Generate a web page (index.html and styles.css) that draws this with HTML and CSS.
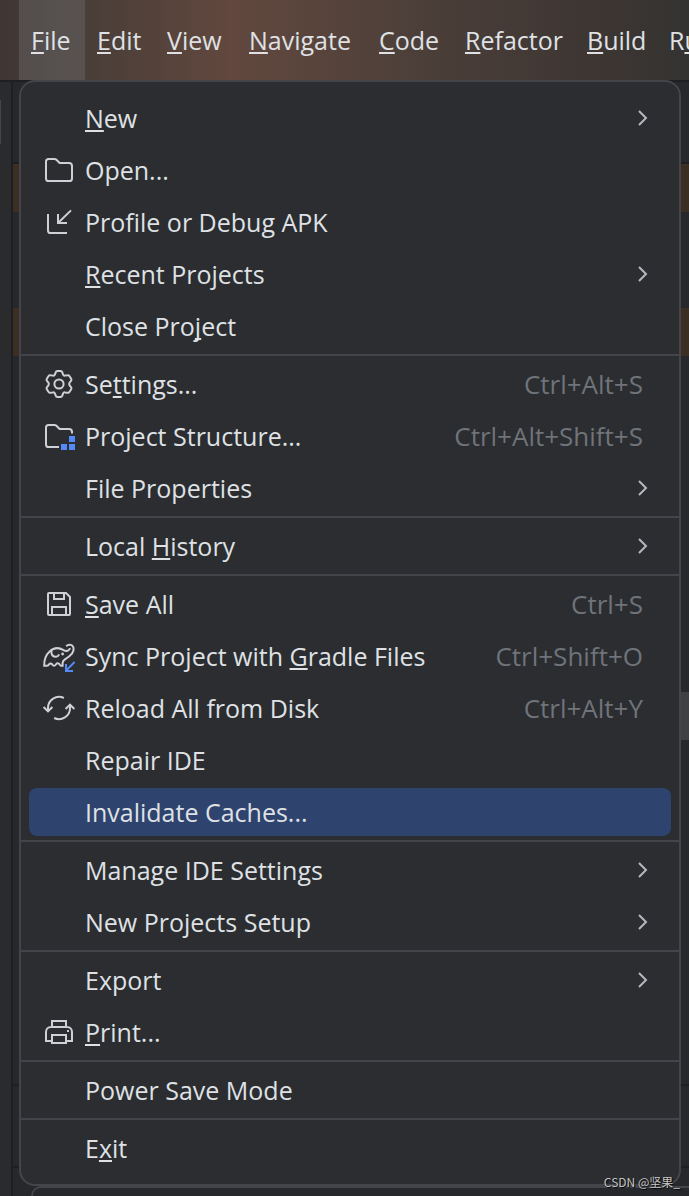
FILE: index.html
```html
<!DOCTYPE html>
<html lang="en">
<head>
    <meta charset="UTF-8">
    <meta name="viewport" content="width=device-width, initial-scale=1.0">
    <title>File Menu</title>
    <link rel="stylesheet" href="styles.css">
</head>
<body>
    <nav class="menubar">
        <button type="button" class="active"><u>F</u>ile</button>
        <button type="button"><u>E</u>dit</button>
        <button type="button"><u>V</u>iew</button>
        <button type="button"><u>N</u>avigate</button>
        <button type="button"><u>C</u>ode</button>
        <button type="button"><u>R</u>efactor</button>
        <button type="button"><u>B</u>uild</button>
        <button type="button">R<u>u</u>n</button>
    </nav>

    <!-- editor window behind the menu -->
    <main class="workspace">
        <div class="rail"><div class="tool"></div></div>
        <div class="editor">
            <div class="tabs"></div>
            <div class="band"></div>
            <div class="gap"></div>
            <div class="band"></div>
            <div class="code"><div class="thumb"></div></div>
            <div class="panel"></div>
            <div class="status"></div>
            <div class="popup"></div>
        </div>
    </main>

    <div class="menu">
        <button type="button">
            <span class="icon"></span>
            <span class="label"><u>N</u>ew</span>
            <svg class="arrow" viewBox="0 0 10 16"><path d="M1 1l7 7-7 7"/></svg>
        </button>
        <button type="button">
            <svg class="icon" viewBox="0 0 16 16"><path d="M1.5 3.8c0-.8.5-1.3 1.3-1.3h2.9c.4 0 .7.1 1 .4L8.3 4.5H13c.9 0 1.5.6 1.5 1.5v6.2c0 .8-.5 1.3-1.3 1.3H2.8c-.8 0-1.3-.5-1.3-1.3z"/></svg>
            <span class="label">Open...</span>
        </button>
        <button type="button">
            <svg class="icon" viewBox="0 0 16 16"><path d="M2.5 4v8.2c0 .8.5 1.3 1.3 1.3H12M14 2.200L7.5 8.5M7.5 4v4.5H12"/></svg>
            <span class="label">Profile or Debug APK</span>
        </button>
        <button type="button">
            <span class="icon"></span>
            <span class="label"><u>R</u>ecent Projects</span>
            <svg class="arrow" viewBox="0 0 10 16"><path d="M1 1l7 7-7 7"/></svg>
        </button>
        <button type="button">
            <span class="icon"></span>
            <span class="label">Close Pro<u>j</u>ect</span>
        </button>
        <hr>
        <button type="button">
            <svg class="icon" viewBox="0 0 16 16"><path d="M7.2 1.5h1.600c.4 0 .7.2.8.6l.4 1.100c.2.5.6.7 1.100.6l1.200-.2c.4-.1.7.1.9.4l.9 1.400c.2.3.2.7-.1 1l-.7.9c-.3.4-.3.9 0 1.400l.7.9c.3.3.3.7.1 1l-.9 1.400c-.2.3-.5.5-.9.4l-1.200-.2c-.5-.1-.9.1-1.100.6l-.4 1.100c-.1.4-.4.6-.8.6H7.2c-.4 0-.7-.2-.8-.6L6 12.800c-.2-.5-.6-.7-1.100-.6l-1.200.2c-.4.1-.7-.1-.9-.4l-.9-1.400c-.2-.3-.2-.7.1-1l.7-.9c.3-.5.3-1 0-1.400L2 6.400c-.3-.3-.3-.7-.1-1L2.800 4c.2-.3.5-.5.9-.4l1.200.2c.5.1.9-.1 1.100-.6l.4-1.100c.1-.4.4-.6.8-.6z"/><circle cx="8" cy="8" r="2.3"/></svg>
            <span class="label">Se<u>t</u>tings...</span>
            <span class="keys">Ctrl+Alt+S</span>
        </button>
        <button type="button">
            <svg class="icon" viewBox="0 0 16 16"><path d="M8 13.5H2.8c-.8 0-1.3-.5-1.3-1.3V3.8c0-.8.5-1.3 1.3-1.3h2.900c.4 0 .7.1 1 .4L8.3 4.5H13c.9 0 1.5.6 1.5 1.5v.8"/><path class="blue-fill" d="M13 8h3v3h-3zM9 12h3v3H9zM13 12h3v3h-3z"/></svg>
            <span class="label">Project Structure...</span>
            <span class="keys">Ctrl+Alt+Shift+S</span>
        </button>
        <button type="button">
            <span class="icon"></span>
            <span class="label">File Properties</span>
            <svg class="arrow" viewBox="0 0 10 16"><path d="M1 1l7 7-7 7"/></svg>
        </button>
        <hr>
        <button type="button">
            <span class="icon"></span>
            <span class="label">Local <u>H</u>istory</span>
            <svg class="arrow" viewBox="0 0 10 16"><path d="M1 1l7 7-7 7"/></svg>
        </button>
        <hr>
        <button type="button">
            <svg class="icon" viewBox="0 0 16 16"><path d="M3 2.5h8.500l2 2V13c0 .3-.2.5-.5.5H3c-.3 0-.5-.2-.5-.5V3c0-.3.2-.5.5-.5zM5.5 2.5v3h5v-3M4.5 13.500v-4h7v4"/></svg>
            <span class="label"><u>S</u>ave All</span>
            <span class="keys">Ctrl+S</span>
        </button>
        <button type="button">
            <svg class="icon" viewBox="0 0 16 16"><path d="M11.6 3.1C12.7 2 14.6 2.200 15.200 3.700c.8 2.200-1.300 4.200-4.400 6.100-.7.5-1 1-1 1.700v1.400H9c-.4 0-.6-.6-1-1-.5-.4-1-.4-1.400.1-.3.4-.5.900-1.100.9s-.7-.5-1.100-.9-.9-.4-1.300.1c-.3.5-.6.8-1.200.8H.600C.500 9.700 1.300 7.500 3.300 5.700c2.200-2 4.900-1.900 7-.6 1.300.7 3 .4 3.200-1"/><path d="M4.300 5.200c-.4 1.800.4 3.100 1.900 3.200 1 .1 1.500-.4 1.900-1.200"/><circle class="dot" cx="9.800" cy="7" r=".7"/><path class="blue" d="M15.800 11l-4.300 4.300M11.500 12v3.500H15"/></svg>
            <span class="label">Sync Project with <u>G</u>radle Files</span>
            <span class="keys">Ctrl+Shift+O</span>
        </button>
        <button type="button">
            <svg class="icon" viewBox="0 0 16 16"><path d="M2.5 9.500V8A5.500 5.500 0 0 1 10.400 3M.3 7.500l2.200 2.200 2.200-2.200M13.500 6.500V8a5.500 5.500 0 0 1-7.900 5M11.300 8.500l2.200-2.200 2.200 2.200"/></svg>
            <span class="label">Reload All from Disk</span>
            <span class="keys">Ctrl+Alt+Y</span>
        </button>
        <button type="button">
            <span class="icon"></span>
            <span class="label">Repair IDE</span>
        </button>
        <button type="button" class="selected">
            <span class="icon"></span>
            <span class="label">Invalidate Caches...</span>
        </button>
        <hr>
        <button type="button">
            <span class="icon"></span>
            <span class="label">Manage IDE Settings</span>
            <svg class="arrow" viewBox="0 0 10 16"><path d="M1 1l7 7-7 7"/></svg>
        </button>
        <button type="button">
            <span class="icon"></span>
            <span class="label">New Projects Setup</span>
            <svg class="arrow" viewBox="0 0 10 16"><path d="M1 1l7 7-7 7"/></svg>
        </button>
        <hr>
        <button type="button">
            <span class="icon"></span>
            <span class="label">Export</span>
            <svg class="arrow" viewBox="0 0 10 16"><path d="M1 1l7 7-7 7"/></svg>
        </button>
        <button type="button">
            <svg class="icon" viewBox="0 0 16 16"><path d="M4.5 5.5v-3h7v3M4.5 12.5h-3V8c0-1.400 1-2.500 2.500-2.500h8c1.500 0 2.500 1.100 2.500 2.500v4.500h-3M4.5 9.500h7v4h-7z"/><path class="dot" d="M12 7h1v1h-1z"/></svg>
            <span class="label"><u>P</u>rint...</span>
        </button>
        <hr>
        <button type="button">
            <span class="icon"></span>
            <span class="label">Power Save Mode</span>
        </button>
        <hr>
        <button type="button">
            <span class="icon"></span>
            <span class="label">E<u>x</u>it</span>
        </button>
    </div>

    <div class="watermark">CSDN @坚果_</div>
</body>
</html>
```
FILE: styles.css
```css
* {
    box-sizing: border-box;
}

body {
    margin: 0;
    height: 100vh;
    display: flex;
    flex-direction: column;
    position: relative;
    overflow: hidden;
    background-color: #26282b;
    color: #dfe1e5;
    font-family: "Open Sans", "Noto Sans", sans-serif;
    font-size: 25px;
}

button {
    border: none;
    background: none;
    color: inherit;
    font: inherit;
    text-align: left;
    white-space: nowrap;
}

u {
    text-decoration: underline 2px;
    text-underline-offset: 2px;
    text-decoration-skip-ink: none;
}

/* top bar */
.menubar {
    display: grid;
    grid-template-columns: 66px 70px 82px 130px 86px 122px 82px minmax(0, 1fr);
    flex: none;
    height: 80px;
    padding-left: 19px;
    background: linear-gradient(90deg, #403735 0, #4e4039 120px, #62483e 232px, #4c3f39 415px, #3e3633 590px, #343331 100%);
}

.menubar button {
    padding: 0 0 0 12px;
    overflow: hidden;
}

.menubar .active {
    background-color: rgba(110, 112, 115, 0.4);
}

/* background window */
.workspace {
    display: flex;
    flex: 1;
    min-height: 0;
    border-top: 2px solid #1e1f22;
}

.rail {
    width: 13px;
    padding-top: 18px;
    border-right: 2px solid #1e1f22;
    background-color: #292b2d;
}

.tool {
    width: 1px;
    height: 44px;
    background-color: #43454a;
}

.editor {
    display: flex;
    flex-direction: column;
    flex: 1;
}

.tabs {
    height: 82px;
    border-bottom: 2px solid #1e1f22;
}

.band {
    height: 48px;
    background-color: #3a2f22;
}

.gap {
    height: 96px;
}

.code {
    flex: 1;
    padding-top: 336px;
}

.thumb {
    width: 20px;
    height: 48px;
    margin-left: auto;
    background-color: #3e4044;
}

.panel,
.status {
    height: 82px;
    border-top: 2px solid #1e1f22;
}

.status {
    height: 20px;
}

.popup {
    height: 10px;
    margin-left: 18px;
    border: 2px solid #43454a;
    border-width: 2px 0 0 2px;
    border-radius: 10px 0 0 0;
}

/* file menu */
.menu {
    position: absolute;
    top: 80px;
    left: 19px;
    right: 8px;
    padding: 10px 0 8px 0;
    border: 2px solid #43454a;
    border-radius: 16px;
    background-color: #2b2d30;
}

.menu button {
    display: flex;
    align-items: center;
    gap: 10px;
    width: calc(100% - 16px);
    height: 48px;
    margin: 2px 8px 4px 8px;
    padding: 0 28px 0 14px;
    border-radius: 8px;
}

.menu .selected {
    background-color: #2e436e;
}

.menu hr {
    height: 2px;
    margin: 0 0 4px 0;
    border: none;
    background-color: #43454a;
}

.label {
    flex: 1;
}

.keys {
    color: #6f737a;
    font-size: 26px;
}

.icon {
    flex: none;
    width: 32px;
    height: 32px;
    overflow: visible;
    fill: none;
    stroke: #ced0d6;
    stroke-width: 1;
}

.arrow {
    width: 10px;
    height: 16px;
    margin-right: -5px;
    fill: none;
    stroke: #b4b8bf;
    stroke-width: 2;
}

.icon .blue {
    stroke: #548af7;
}

.icon .blue-fill {
    fill: #548af7;
    stroke: none;
}

.icon .dot {
    fill: #ced0d6;
    stroke: none;
}

.watermark {
    position: absolute;
    right: 9px;
    bottom: 6px;
    color: #c4c4c4;
    font-family: "Noto Sans CJK SC", sans-serif;
    font-size: 12px;
    line-height: 16px;
    text-shadow: 1px 1px 1px #000;
}
```
